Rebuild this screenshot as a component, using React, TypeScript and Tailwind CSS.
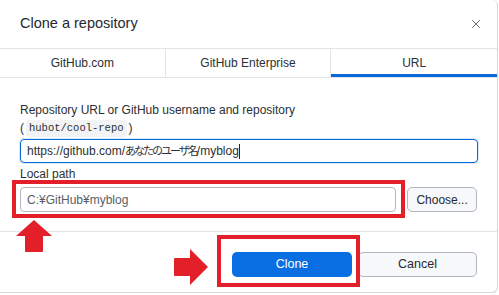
import { X } from 'lucide-react'

const tabs = ['GitHub.com', 'GitHub Enterprise', 'URL']

function UpArrow() {
  return (
    <svg width="38" height="34" viewBox="0 0 38 34" aria-hidden>
      <path d="M19 1 L37 17 L28 17 L28 32 Q28 33 27 33 L11 33 Q10 33 10 32 L10 17 L1 17 Z" fill="#e3202a" />
    </svg>
  )
}

function RightArrow() {
  return (
    <svg width="36" height="38" viewBox="0 0 36 38" aria-hidden>
      <path d="M35 19 L17 1 L17 10 L2 10 Q1 10 1 11 L1 27 Q1 28 2 28 L17 28 L17 37 Z" fill="#e3202a" />
    </svg>
  )
}

export default function App() {
  return (
    <div className="relative w-[499px] h-[295px] overflow-hidden bg-white text-[#2b2f33]" style={{ fontFamily: '"Liberation Sans", "Noto Sans CJK JP", sans-serif' }}>
      <div className="w-[498px] h-[293px] border-r border-b border-[#d0d7de] rounded-tr-md rounded-br-md flex flex-col">
        {/* header */}
        <div className="h-[49px] flex items-center justify-between pl-5 pr-[14px] border-b border-[#e1e4e8] shrink-0">
          <h1 className="text-[14.5px] text-[#24292f]">Clone a repository</h1>
          <X className="w-[14px] h-[14px] text-[#57606a]" strokeWidth={1.6} />
        </div>

        {/* tabs */}
        <div className="grid grid-cols-3 h-[29px] border-b border-[#e1e4e8] shrink-0">
          {tabs.map((t, i) => (
            <div
              key={t}
              className={
                'flex items-center justify-center text-[12px] ' +
                (i < 2 ? 'border-r border-[#e1e4e8] ' : '') +
                (i === 2 ? 'border-b-[3px] border-[#0969da] pt-[3px]' : '')
              }
            >
              {t}
            </div>
          ))}
        </div>

        {/* body */}
        <div className="px-5 pt-[23px] text-[12px]">
          <p className="leading-[18px]">Repository URL or GitHub username and repository</p>
          <p className="leading-[18px] flex items-center gap-[2px]">
            (
            <code className="bg-[#f1f3f5] rounded-[3px] px-[3px] text-[10.5px] leading-[17px]" style={{ fontFamily: '"Liberation Mono", monospace' }}>
              hubot/cool-repo
            </code>
            )
          </p>
          <div className="mt-[2px] h-[24px] w-[458px] border border-[#0969da] rounded-[4px] flex items-center px-[6px] shadow-[0_0_0_1px_rgba(9,105,218,0.15)]">
            <span className="text-[12px] whitespace-nowrap">
              https://github.com/<span className="text-[11px] tracking-[-2px]">あなたのユーザ名</span>/myblog
            </span>
            <span className="w-px h-[15px] bg-[#24292f]" />
          </div>
          <p className="mt-[2px] leading-[18px]">Local path</p>
          <div className="mt-[4px] flex gap-[11px]">
            <div className="h-[25px] w-[377px] border border-[#b0b7bf] rounded-[4px] flex items-center px-[6px]">
              <span className="text-[#57606a]">C:¥GitHub¥myblog</span>
            </div>
            <button className="h-[25px] w-[70px] border border-[#b0b7bf] rounded-[5px] bg-[#f6f8fa] text-[12px] text-[#24292f]">
              Choose...
            </button>
          </div>
        </div>

        {/* footer */}
        <div className="mt-[19px] border-t border-[#e1e4e8] flex justify-end gap-[6px] pr-5 pt-[20px]">
          <button className="h-[25px] w-[120px] rounded-[5px] bg-[#0a6ee3] text-white text-[12.5px]">Clone</button>
          <button className="h-[25px] w-[119px] rounded-[5px] border border-[#b0b7bf] bg-[#f6f8fa] text-[12.5px] text-[#24292f]">
            Cancel
          </button>
        </div>
      </div>

      {/* annotations */}
      <div className="absolute left-[12px] top-[180px] w-[393px] h-[38px] border-[4px] border-[#e3202a]" />
      <div className="absolute left-[217px] top-[235px] w-[143px] h-[52px] border-[4px] border-[#e3202a]" />
      <div className="absolute left-[15px] top-[219px]">
        <UpArrow />
      </div>
      <div className="absolute left-[173px] top-[248px]">
        <RightArrow />
      </div>
    </div>
  )
}
